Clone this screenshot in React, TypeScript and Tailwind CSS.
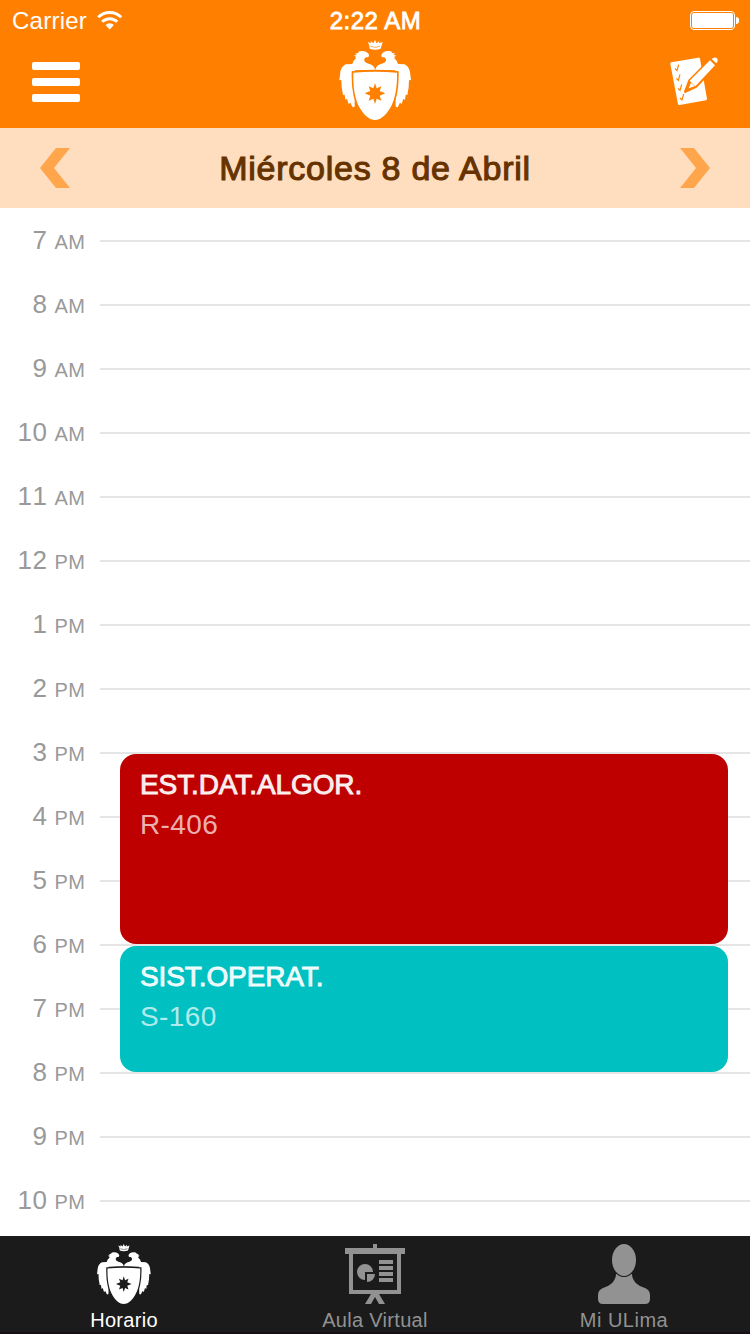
import React from "react";

const FONT = "font-['Liberation_Sans',Arial,sans-serif]";

const WING =
  "M195.5 209 L192 201 C186 193 176 193 166 187 C161 182 162 176 168 172 L174 172 C178 169 178 164 174 160 C170 155 164 152 156 153 L149 154 L143 157 L148 158 L135 161 L141 164 L131 166 L139 168 L134 171 L139 174 L131 182 C128 186 130 189 126 192 L108 193 C98 197 92 208 91 217 L88 241 L94 240 L95 262 L99 285 L104 284 L106 300 L111 296 L116 312 L121 308 L128 322 L134 320 L135 211 Z";

function Crest({ className, backdrop }: { className: string; backdrop: string }) {
  return (
    <svg viewBox="84 120 222 240" className={className} fill="white">
      <path d="M177 134 L173 126 L183 130 L182 123 L190 130 L195 120 L200 130 L208 123 L207 130 L218 126 L212 146 Q195 152 179 146 Z" />
      <path d="M181 139 Q195 145 210 139" fill="none" stroke={backdrop} strokeWidth="2" />
      <path d={WING} />
      <path d={WING} transform="translate(391 0) scale(-1 1)" />
      <path
        d="M130 218 Q195 212 261 218 C262 260 256 298 240 325 C227 347 211 360 195 360 C179 360 163 347 150 325 C134 298 129 260 130 218 Z"
        stroke={backdrop}
        strokeWidth="10"
        paintOrder="stroke"
      />
      <path
        fill={backdrop}
        d="M195 249 L200 265 L214 259 L209 273 L226 280 L209 287 L214 302 L200 296 L195 312 L190 296 L176 302 L181 287 L164 280 L181 273 L176 259 L190 265 Z"
      />
    </svg>
  );
}

function Wifi() {
  return (
    <svg viewBox="0 0 26 20" className="h-5 w-[26px]" fill="none" stroke="white" strokeWidth="3">
      <path d="M1.2 7.3 A16.2 16.2 0 0 1 24.2 7.3" />
      <path d="M5.2 11.8 A10.6 10.6 0 0 1 20.2 11.8" />
      <path d="M12.7 19.4 L8.5 15 A6 6 0 0 1 16.9 15 Z" fill="white" stroke="none" />
    </svg>
  );
}

function Checklist() {
  return (
    <svg viewBox="4 -3 150 150" className="h-[50px] w-[50px] overflow-visible" fill="none">
      <path d="M14 19 L95 5 Q99 4 100 8 L121 129 Q121 132 118 133 L39 147 Q35 148 34 144 L11 24 Q10 20 14 19 Z" fill="white" />
      <g stroke="#ff8000" strokeWidth="3.5">
        <path d="M25 38 L31 44 L36 26" />
        <path d="M29 67 L35 73 L40 55" />
        <path d="M34 97 L40 103 L45 85" />
        <path d="M40 126 L46 132 L51 114" />
      </g>
      <path d="M56 107 L69 73 L130 12 L147 29 L88 92 Z" fill="white" stroke="#ff8000" strokeWidth="8" strokeLinejoin="round" />
      <path d="M56 107 L69 73 L88 92 Z" fill="#ff8000" />
      <path d="M66 97 L73 80 L84 91 Z" fill="white" />
      <path d="M69 74 L130 13 L145 28 L86 91 Z" fill="white" />
      <path d="M135 9 Q143 1 151 7 Q156 15 149 22 Z" fill="white" />
    </svg>
  );
}

function Board() {
  return (
    <svg viewBox="0 0 60 60" className="h-[60px] w-[60px]" fill="#929292">
      <path d="M0 4 H28 V0 H32 V4 H60 V10 H0 Z" />
      <path d="M4 9 H56 V50 H4 Z M8 10 V46 H52 V10 Z" fillRule="evenodd" />
      <path d="M26 50 H34 L40 60 H34 L30 53 L26 60 H20 Z" />
      <path d="M20 28 V36 A8 8 0 1 1 28 28 Z" />
      <path d="M22 30 H30 A8 8 0 0 1 22 38 Z" />
      <path d="M34 16 H48 V20 H34 Z M34 22 H48 V26 H34 Z M34 28 H48 V32 H34 Z M34 34 H48 V38 H34 Z" />
    </svg>
  );
}

function Person() {
  return (
    <svg viewBox="0 0 52 60" className="h-[60px] w-[52px]" fill="#929292">
      <path d="M18 30 C18 37 12 42 5 44 Q0 46 0 51 V55 Q0 60 5 60 H47 Q52 60 52 55 V51 Q52 46 47 44 C40 42 34 37 34 30 Z" />
      <ellipse cx="26" cy="16" rx="12" ry="16" stroke="#1b1b1b" strokeWidth="2" paintOrder="stroke" />
    </svg>
  );
}

const HOURS: [string, string][] = [
  ["7", "AM"], ["8", "AM"], ["9", "AM"], ["10", "AM"], ["11", "AM"], ["12", "PM"], ["1", "PM"], ["2", "PM"],
  ["3", "PM"], ["4", "PM"], ["5", "PM"], ["6", "PM"], ["7", "PM"], ["8", "PM"], ["9", "PM"], ["10", "PM"],
];

function Course({ name, room, className }: { name: string; room: string; className: string }) {
  return (
    <div className={`absolute left-[120px] right-[22px] rounded-2xl px-5 pt-[11px] text-[28px] leading-10 ${className}`}>
      <div className="tracking-[-0.1px] text-white/90 [-webkit-text-stroke:0.9px]">{name}</div>
      <div className="tracking-[0.4px] text-white/70">{room}</div>
    </div>
  );
}

export default function App() {
  return (
    <div className={`flex h-[1334px] w-[750px] flex-col overflow-hidden bg-white ${FONT}`}>
      <header className="h-32 bg-[#ff8000] text-white">
        <div className="grid h-10 grid-cols-3 items-center pl-3 pr-[11px]">
          <div className="flex items-center gap-[10px]">
            <span className="pt-0.5 text-[24px] leading-7 tracking-[0.25px]">Carrier</span>
            <Wifi />
          </div>
          <span className="pt-0.5 text-center text-[24px] leading-7 tracking-[0.5px] [-webkit-text-stroke:0.8px]">2:22 AM</span>
          <div className="flex items-center justify-end gap-px">
            <div className="h-[19px] w-[45px] rounded-[4px] border border-white p-px">
              <div className="h-full rounded-[2px] bg-white" />
            </div>
            <div className="h-[7px] w-[3px] rounded-r-full bg-white" />
          </div>
        </div>
        <div className="flex h-20 items-center justify-between px-8">
          <div className="flex w-[50px] flex-col gap-2 pt-1">
            <div className="h-2 w-12 rounded-[2px] bg-white" />
            <div className="h-2 w-12 rounded-[2px] bg-white" />
            <div className="h-2 w-12 rounded-[2px] bg-white" />
          </div>
          <Crest className="h-20 w-[74px]" backdrop="#ff8000" />
          <Checklist />
        </div>
      </header>

      <div className="flex h-20 items-center justify-between bg-[#ffdebf] px-10">
        <svg viewBox="0 0 30 40" className="h-10 w-[30px]" fill="#ffa54c"><path d="M16 0 H30 L14 20 L30 40 H16 L0 20 Z" /></svg>
        <span className="text-[34px] tracking-[0.75px] text-[#663300] [-webkit-text-stroke:1.1px]">Miércoles 8 de Abril</span>
        <svg viewBox="0 0 30 40" className="h-10 w-[30px]" fill="#ffa54c"><path d="M14 0 H0 L16 20 L0 40 H14 L30 20 Z" /></svg>
      </div>

      <main className="relative h-[1028px] overflow-hidden">
        {HOURS.map(([hour, half]) => (
          <div key={hour + half} className="flex h-16 items-center">
            <div className="flex w-[85px] items-baseline justify-end gap-[7px] text-[26px] text-[#999999]">
              <span className="tracking-[0.6px] [font-kerning:none]">{hour}</span>
              <span className="text-[20px] tracking-[0.2px]">{half}</span>
            </div>
            <div className="ml-[15px] mt-0.5 h-0.5 flex-1 bg-[#e5e5e5]" />
          </div>
        ))}
        <Course name="EST.DAT.ALGOR." room="R-406" className="top-[546px] h-[190px] bg-[#bf0000]" />
        <Course name="SIST.OPERAT." room="S-160" className="top-[738px] h-[126px] bg-[#00c0c2]" />
      </main>

      <nav className="grid h-[98px] grid-cols-[248px_254px_244px] border-b-2 border-[#160d15] bg-[#1b1b1b] pt-2 text-[20px] leading-6 text-[#929292]">
        <div className="flex flex-col items-center gap-1 text-white">
          <Crest className="h-[60px] w-[55.5px]" backdrop="#1b1b1b" />
          <span className="tracking-[0.3px]">Horario</span>
        </div>
        <div className="flex flex-col items-center gap-1">
          <Board />
          <span className="tracking-[0.3px]">Aula Virtual</span>
        </div>
        <div className="flex flex-col items-center gap-1">
          <Person />
          <span className="tracking-[0.5px]">Mi ULima</span>
        </div>
      </nav>
    </div>
  );
}
